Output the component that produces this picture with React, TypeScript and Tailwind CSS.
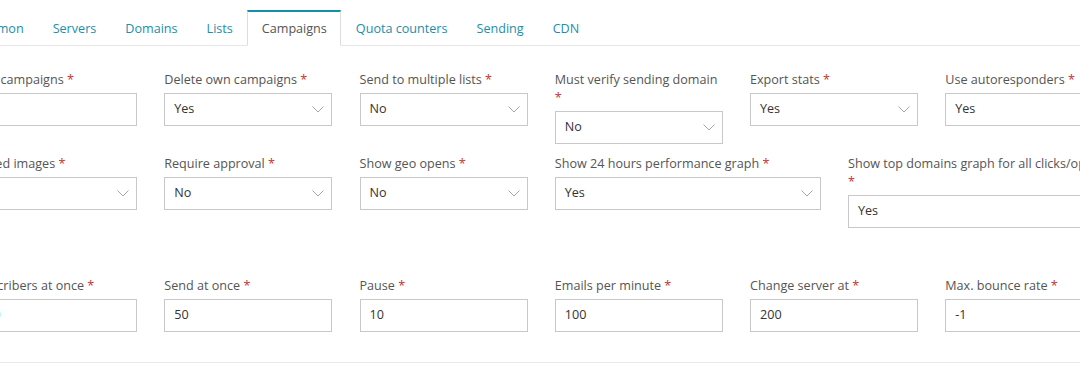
import React from "react";

// Types
type Field = {
  label: string;
  value: string;
  select?: boolean;
  wrap?: boolean;
  wide?: boolean;
  valueClass?: string;
};

const tabs = ["Common", "Servers", "Domains", "Lists", "Campaigns", "Quota counters", "Sending", "CDN"];

const rows: { className: string; fields: Field[] }[] = [
  {
    className: "mt-[23px]",
    fields: [
      { label: "Max. campaigns", value: "-1" },
      { label: "Delete own campaigns", value: "Yes", select: true },
      { label: "Send to multiple lists", value: "No", select: true },
      { label: "Must verify sending domain", value: "No", select: true, wrap: true },
      { label: "Export stats", value: "Yes", select: true },
      { label: "Use autoresponders", value: "Yes", select: true },
    ],
  },
  {
    className: "mt-[9px]",
    fields: [
      { label: "Embed images", value: "Yes", select: true },
      { label: "Require approval", value: "No", select: true },
      { label: "Show geo opens", value: "No", select: true },
      { label: "Show 24 hours performance graph", value: "Yes", select: true, wide: true },
      { label: "Show top domains graph for all clicks/opens", value: "Yes", select: true, wide: true, wrap: true },
    ],
  },
  {
    className: "mt-[47px]",
    fields: [
      { label: "Subscribers at once", value: "100", valueClass: "text-[#5bc0de]" },
      { label: "Send at once", value: "50" },
      { label: "Pause", value: "10" },
      { label: "Emails per minute", value: "100" },
      { label: "Change server at", value: "200" },
      { label: "Max. bounce rate", value: "-1" },
    ],
  },
];

const Req = () => <span className="text-[#c9302c]">*</span>;

const Chevron = () => (
  <svg width="12" height="7" viewBox="0 0 12 7" className="shrink-0" aria-hidden="true">
    <path d="M0.5 0.5 L6 6 L11.5 0.5" fill="none" stroke="#a8a8a8" strokeWidth="1" />
  </svg>
);

function FormField({ field }: { field: Field }) {
  return (
    <div className={field.wide ? "w-[266px] shrink-0" : "w-[168px] shrink-0"}>
      <label className="mb-[3.5px] block whitespace-nowrap pt-[1.5px] leading-[18.57px] text-[#555]">
        {field.label}
        {field.wrap ? <br /> : " "}
        <Req />
      </label>
      <div className="flex h-[33px] items-center justify-between border border-[#c8c8c8] pl-[9px] pr-[7px] text-[#333]">
        <span className={field.valueClass}>{field.value}</span>
        {field.select && <Chevron />}
      </div>
    </div>
  );
}

export default function App() {
  return (
    <div className="h-[368px] w-[1080px] overflow-hidden bg-white font-['Open_Sans',sans-serif] text-[12.6px]">
      <ul className="ml-[-45px] mt-[10px] flex border-b border-[#e6e6e6]">
        {tabs.map((tab) => {
          const active = tab === "Campaigns";
          return (
            <li key={tab} className="-mb-px">
              <span
                className={
                  active
                    ? "block border border-t-2 border-[#ddd] border-b-white border-t-[#1190a9] bg-white px-[13.5px] pb-[7px] pt-[8px] leading-[18px] text-[#555]"
                    : "block border border-t-2 border-transparent px-[13.5px] pb-[7px] pt-[8px] leading-[18px] text-[#1a8fab]"
                }
              >
                {tab}
              </span>
            </li>
          );
        })}
      </ul>

      <div className="ml-[-31px]">
        {rows.map((row, i) => (
          <div key={i} className={"flex items-start gap-[27.25px] " + row.className}>
            {row.fields.map((field) => (
              <FormField key={field.label} field={field} />
            ))}
          </div>
        ))}
      </div>

      <div className="mt-[30px] border-t border-[#eaeaea]" />
    </div>
  );
}
